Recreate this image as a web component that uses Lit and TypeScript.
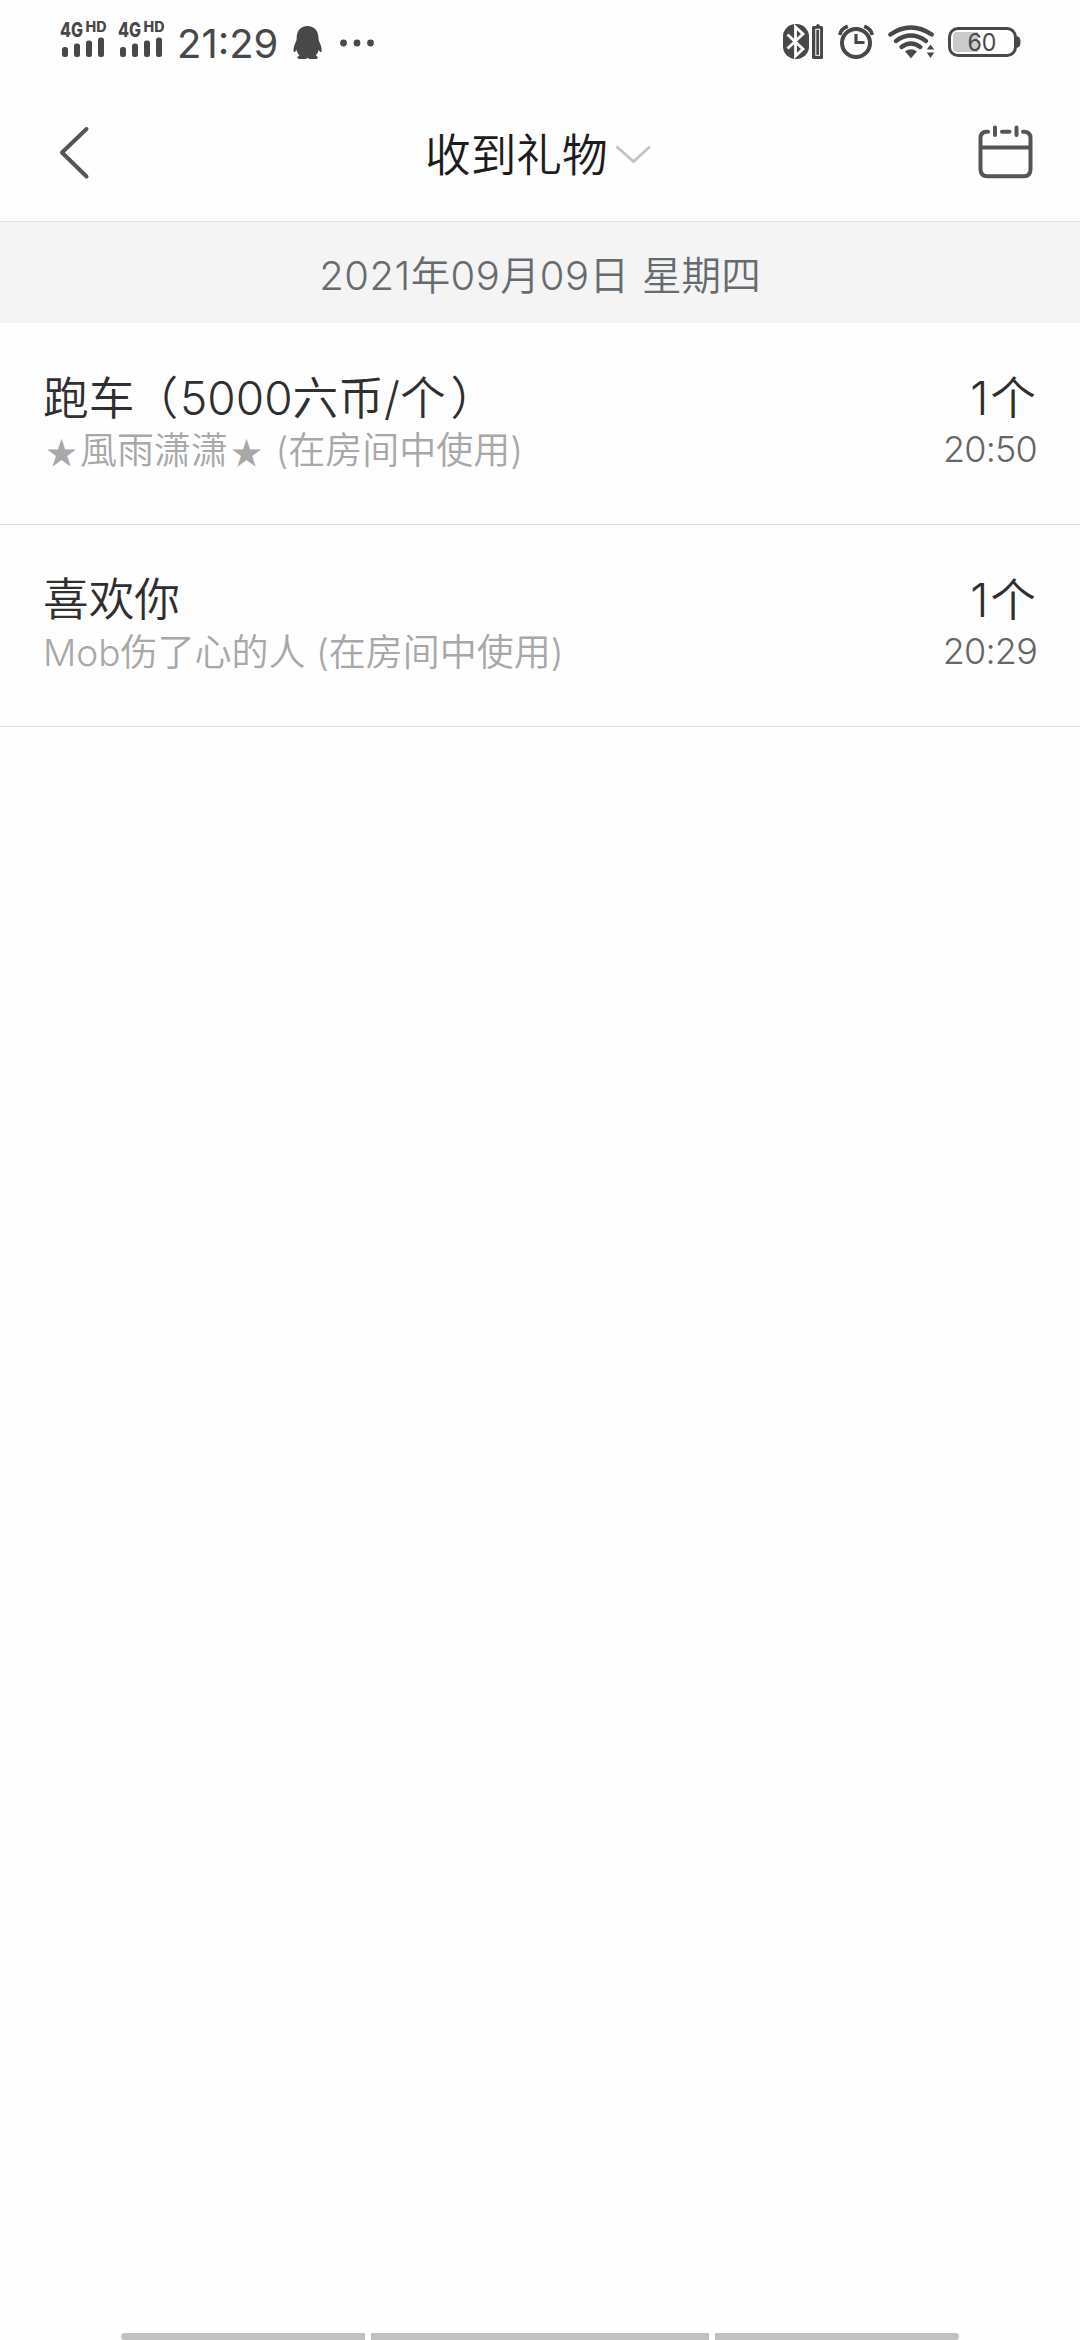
import { LitElement, html, css, svg } from "lit";
import { customElement, property } from "lit/decorators.js";

interface Gift {
  name: unknown;
  from: unknown;
  count: string;
  time: string;
}

const gifts: Gift[] = [
  {
    name: html`跑车<span class="open">（</span><span class="digits">5000</span>六币<span class="slash">/</span>个<span class="close">）</span>`,
    from: html`<span class="star">★</span>風雨潇潇<span class="star">★</span> (在房间中使用)`,
    count: "1",
    time: "20:50",
  },
  {
    name: html`喜欢你`,
    from: html`<span class="latin">Mob</span>伤了心的人 (在房间中使用)`,
    count: "1",
    time: "20:29",
  },
];

const signal = (x: number) => svg`
  <g transform="translate(${x} 0)">
    <text x="0" y="36.500" font-size="20" font-weight="800" textLength="23" lengthAdjust="spacingAndGlyphs">4G</text>
    <text x="25.500" y="32" font-size="14" font-weight="800" textLength="21" lengthAdjust="spacingAndGlyphs">HD</text>
    <rect x="2" y="47" width="6" height="10" rx="2.500"/>
    <rect x="14" y="43.500" width="6" height="13.500" rx="2.500"/>
    <rect x="26" y="40.500" width="6" height="16.500" rx="2.500"/>
    <rect x="38" y="37.500" width="6" height="19.500" rx="2.500"/>
  </g>`;

@customElement("status-bar")
class StatusBar extends LitElement {
  static styles = css`
    :host {
      display: flex;
      justify-content: space-between;
      height: 84px;
      color: #484848;
      font-family: Inter, Roboto, sans-serif;
    }
    svg { display: block; fill: currentColor; }
    .left { display: flex; padding-left: 60px; }
    .clock {
      width: 103px;
      margin-left: 12px;
      font-size: 40px;
      font-weight: 380;
      line-height: 88px;
      white-space: nowrap;
    }
  `;
  render() {
    return html`
      <div class="left">
        <svg width="105" height="84">${signal(0)}${signal(58)}</svg>
        <div class="clock">21:29</div>
        <svg width="100" height="84" viewBox="280 0 100 84">
          <path d="M307.500 26c-6.800 0-10.800 5-10.800 11.500 0 1.700-.2 3-.8 4.300-1.500 3.200-2.400 6.200-2.400 8.600 0 1.600.9 2.200 1.800 1.100l1.300-1.500c.4 2 1.400 4 2.900 5.500-1.300.7-2 1.500-2 2.300 0 .7.500 1.200 1.500 1.200h6.500l2-1h.2l2 1h6.500c1 0 1.500-.5 1.500-1.200 0-.8-.7-1.600-2-2.300 1.500-1.500 2.500-3.500 2.900-5.500l1.300 1.500c.9 1.100 1.800.5 1.800-1.100 0-2.400-.9-5.400-2.400-8.600-.6-1.300-.8-2.600-.8-4.300C318.300 31 314.300 26 307.500 26z"/>
          <circle cx="343.500" cy="43" r="3.400"/><circle cx="357" cy="43" r="3.400"/><circle cx="370.500" cy="43" r="3.400"/>
        </svg>
      </div>
      <svg width="320" height="84" viewBox="760 0 320 84">
        <rect x="783" y="24" width="26" height="35" rx="12.500"/>
        <path d="M787.500 34.500 803 49l-7.500 7V27l7.500 7-15.500 14.500" fill="none" stroke="#fff" stroke-width="2.800"/>
        <path d="M814.500 26h1.500q.5-2 2-2 1.500 0 2 2h1.500q1.500 0 1.500 1.500v30q0 1.500-1.500 1.500h-8q-1.500 0-1.500-1.500v-30q0-1.500 1.500-1.500z"/>
        <rect x="815.800" y="29.300" width="3.800" height="26" fill="none" stroke="#fff" stroke-width="1"/>
        <g fill="none" stroke="currentColor">
          <circle cx="856" cy="43" r="14" stroke-width="4"/>
          <path d="M856 34v8.500h8.500" stroke-width="3.200"/>
          <path d="M839.800 35q1-6 8-8.700M872.200 35q-1-6-8-8.700" stroke-width="3.600"/>
          <g stroke-width="4.400" stroke-linecap="round">
            <path d="M890.300 34.500q20.500-14 41.500 0"/>
            <path d="M896 41q14.800-11 30 0"/>
            <path d="M901.500 47q9.300-7 18.800 0"/>
          </g>
        </g>
        <path d="M905 51.500q6-4.500 12 0l-6 6.700z"/>
        <path d="m930.500 44.500 3.700 5h-7.400zM930.500 58l3.700-5.500h-7.400z"/>
        <path d="M956.500 32H978v20h-21.500q-3.500 0-3.500-4V36q0-4 3.500-4z" fill="#cbcbcb"/>
        <rect x="949.500" y="28.500" width="66" height="27" rx="8.500" fill="none" stroke="currentColor" stroke-width="3"/>
        <path d="M1017 36c3 1 3.500 3 3.500 6s-.5 5-3.500 6z"/>
        <text x="967.500" y="51" font-size="24.500" textLength="29" lengthAdjust="spacingAndGlyphs">60</text>
      </svg>
    `;
  }
}

@customElement("nav-bar")
class NavBar extends LitElement {
  static styles = css`
    :host {
      display: grid;
      grid-template-columns: 120px 1fr 120px;
      height: 137px;
      border-bottom: 1px solid #dfdfdf;
      font-family: "Noto Sans CJK SC", sans-serif;
    }
    svg { display: block; fill: none; stroke: #555; }
    .title {
      display: flex;
      padding-left: 305px;
      color: #1c1c1c;
      font-size: 45.700px;
      font-weight: 350;
      line-height: 136px;
      white-space: nowrap;
    }
  `;
  render() {
    return html`
      <svg width="120" height="137" viewBox="0 84 120 137"><path d="M86.500 129 62 152.500 86.500 176.500" stroke-width="4" stroke-linecap="round" stroke-linejoin="round"/></svg>
      <div class="title">收到礼物<svg width="60" height="137" viewBox="608 84 60 137"><path d="M616.500 146.500 633.500 161.500 650 146.500" stroke="#c4c4c4" stroke-width="2.800"/></svg>
      </div>
      <svg width="120" height="137" viewBox="960 84 120 137">
        <path d="M988 131.800h-1.500q-6 0-6 6.500v31q0 7 7 7h36q7 0 7-7v-31q0-6.500-6.500-6.500h-1M1002 131.800h7.500M995 127.500v7.500M1016.500 127.500v7.500" stroke-width="4" stroke-linecap="round"/>
        <path d="M980 147.500h50.500" stroke-width="4"/>
      </svg>
    `;
  }
}

@customElement("gift-row")
class GiftRow extends LitElement {
  @property({ attribute: false }) gift!: Gift;
  static styles = css`
    :host {
      display: flex;
      justify-content: space-between;
      box-sizing: border-box;
      height: 202px;
      padding: 47px 44px 0 43px;
      border-bottom: 1px solid #dedede;
      font-family: Inter, "Noto Sans CJK SC", sans-serif;
      font-weight: 350;
      white-space: nowrap;
    }
    .name, .count {
      height: 56px;
      line-height: 56px;
      font-size: 45.700px;
      color: #2f2f2f;
    }
    .from {
      height: 48px;
      margin-top: 1px;
      line-height: 48px;
      font-size: 37px;
      color: #a8a8a8;
    }
    .star {
      display: inline-block;
      width: 37px;
      font-family: "Noto Sans CJK SC", sans-serif;
      font-size: 31px;
      line-height: 1;
      text-align: center;
    }
    .right { display: flex; flex-direction: column; align-items: flex-end; }
    .digits, .slash, .latin, .time { font-weight: 300; }
    .digits { font-size: 46px; }
    .open { margin: 0 2px 0 -2px; }
    .close { margin-left: 5px; }
    .count .digits { margin-right: 2px; }
    .time {
      height: 48px;
      margin: -1px -1px 0 0;
      line-height: 48px;
      font-size: 36px;
      letter-spacing: -0.800px;
      color: #666;
    }
  `;
  render() {
    const g = this.gift;
    return html`
      <div><div class="name">${g.name}</div><div class="from">${g.from}</div></div>
      <div class="right">
        <div class="count"><span class="digits">${g.count}</span>个</div>
        <div class="time">${g.time}</div>
      </div>
    `;
  }
}

@customElement("app-root")
class AppRoot extends LitElement {
  static styles = css`
    :host {
      display: flex;
      flex-direction: column;
      width: 1080px;
      height: 2340px;
      overflow: hidden;
      background: #fefefe;
    }
    .date {
      height: 101px;
      background: #f4f4f4;
      color: #666b70;
      text-align: center;
      font: 350 39.600px/101px "Noto Sans CJK SC", sans-serif;
      word-spacing: 4px;
      white-space: nowrap;
    }
    .num { font-family: Inter, sans-serif; font-size: 40px; font-weight: 300; letter-spacing: 0.500px; }
    .home { display: flex; gap: 6px; margin: auto 121px 0; height: 7px; }
    .seg { flex: 244; background: #c1c1c1; }
    .seg:first-child { border-radius: 4px 0 0 4px; }
    .seg:last-child { border-radius: 0 4px 4px 0; }
    .mid { flex: 338; }
  `;
  render() {
    return html`
      <status-bar></status-bar>
      <nav-bar></nav-bar>
      <div class="date"><span class="num">2021</span>年<span class="num">09</span>月<span class="num">09</span>日 星期四</div>
      ${gifts.map((g) => html`<gift-row .gift=${g}></gift-row>`)}
      <div class="home"><div class="seg"></div><div class="seg mid"></div><div class="seg"></div></div>
    `;
  }
}
